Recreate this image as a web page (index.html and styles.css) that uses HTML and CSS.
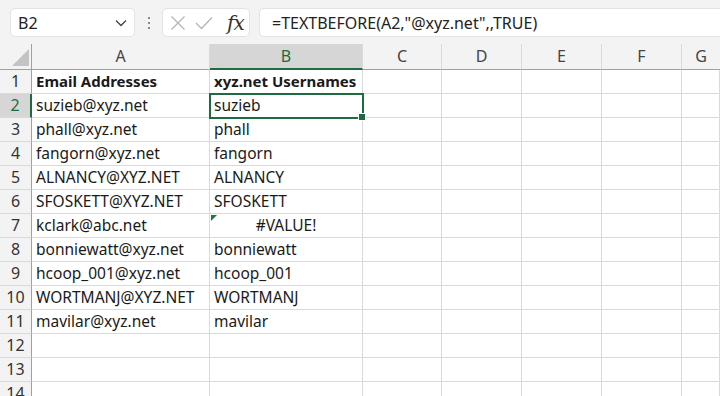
FILE: index.html
```html
<!DOCTYPE html>
<html>
<head>
<meta charset="utf-8">
<link rel="stylesheet" href="styles.css">
</head>
<body>
<div class="top">
  <div class="namebox"><span class="ref">B2</span>
    <svg class="chev" width="12" height="8" viewBox="0 0 12 8"><path d="M1 1.5 L6 6.5 L11 1.5" fill="none" stroke="#444" stroke-width="1.3"/></svg>
  </div>
  <div class="dots"><i></i><i></i><i></i></div>
  <div class="fxbox">
    <svg width="16" height="16" viewBox="0 0 16 16"><path d="M1.5 1.5 L14.5 14.5 M14.5 1.5 L1.5 14.5" stroke="#b5b5b5" stroke-width="1.3" fill="none"/></svg>
    <svg width="18" height="14" viewBox="0 0 18 14"><path d="M1 7 L6.5 12.5 L17 1.5" stroke="#b5b5b5" stroke-width="1.3" fill="none"/></svg>
    <span class="fx">fx</span>
  </div>
  <div class="formula">=TEXTBEFORE(A2,"@xyz.net",,TRUE)</div>
</div>
<div class="sheet">
  <div class="hd corner"><span class="tri"></span></div>
  <div class="hd col">A</div>
  <div class="hd col sel">B</div>
  <div class="hd col">C</div>
  <div class="hd col">D</div>
  <div class="hd col">E</div>
  <div class="hd col">F</div>
  <div class="hd col last">G</div>

  <div class="rh">1</div><div class="c b">Email Addresses</div><div class="c b">xyz.net Usernames</div><div class="c"></div><div class="c"></div><div class="c"></div><div class="c"></div><div class="c"></div>
  <div class="rh sel">2</div><div class="c">suzieb@xyz.net</div><div class="c active">suzieb<span class="handle"></span></div><div class="c"></div><div class="c"></div><div class="c"></div><div class="c"></div><div class="c"></div>
  <div class="rh">3</div><div class="c">phall@xyz.net</div><div class="c">phall</div><div class="c"></div><div class="c"></div><div class="c"></div><div class="c"></div><div class="c"></div>
  <div class="rh">4</div><div class="c">fangorn@xyz.net</div><div class="c">fangorn</div><div class="c"></div><div class="c"></div><div class="c"></div><div class="c"></div><div class="c"></div>
  <div class="rh">5</div><div class="c">ALNANCY@XYZ.NET</div><div class="c">ALNANCY</div><div class="c"></div><div class="c"></div><div class="c"></div><div class="c"></div><div class="c"></div>
  <div class="rh">6</div><div class="c">SFOSKETT@XYZ.NET</div><div class="c">SFOSKETT</div><div class="c"></div><div class="c"></div><div class="c"></div><div class="c"></div><div class="c"></div>
  <div class="rh">7</div><div class="c">kclark@abc.net</div><div class="c err"><span class="flag"></span>#VALUE!</div><div class="c"></div><div class="c"></div><div class="c"></div><div class="c"></div><div class="c"></div>
  <div class="rh">8</div><div class="c">bonniewatt@xyz.net</div><div class="c">bonniewatt</div><div class="c"></div><div class="c"></div><div class="c"></div><div class="c"></div><div class="c"></div>
  <div class="rh">9</div><div class="c">hcoop_001@xyz.net</div><div class="c">hcoop_001</div><div class="c"></div><div class="c"></div><div class="c"></div><div class="c"></div><div class="c"></div>
  <div class="rh">10</div><div class="c">WORTMANJ@XYZ.NET</div><div class="c">WORTMANJ</div><div class="c"></div><div class="c"></div><div class="c"></div><div class="c"></div><div class="c"></div>
  <div class="rh">11</div><div class="c">mavilar@xyz.net</div><div class="c">mavilar</div><div class="c"></div><div class="c"></div><div class="c"></div><div class="c"></div><div class="c"></div>
  <div class="rh">12</div><div class="c"></div><div class="c"></div><div class="c"></div><div class="c"></div><div class="c"></div><div class="c"></div><div class="c"></div>
  <div class="rh">13</div><div class="c"></div><div class="c"></div><div class="c"></div><div class="c"></div><div class="c"></div><div class="c"></div><div class="c"></div>
  <div class="rh">14</div><div class="c"></div><div class="c"></div><div class="c"></div><div class="c"></div><div class="c"></div><div class="c"></div><div class="c"></div>
</div>
</body>
</html>
```
FILE: styles.css
```css
* { box-sizing: border-box; }
html, body { margin: 0; padding: 0; }
body {
  width: 720px;
  height: 396px;
  overflow: hidden;
  background: #fff;
  font-family: "Noto Sans", "Open Sans", sans-serif;
  font-size: 15.5px;
  color: #1a1a1a;
}
.top {
  height: 44px;
  background: #f3f3f3;
  display: flex;
  align-items: flex-start;
  padding: 8px 0 0 10px;
}
.namebox {
  width: 125px;
  height: 29px;
  background: #fff;
  border: 1px solid #e3e3e3;
  border-radius: 5px;
  display: flex;
  align-items: center;
  justify-content: space-between;
  padding: 0 7px 0 7px;
}
.namebox .ref { color: #222; font-size: 16px; }
.dots {
  width: 27px;
  height: 29px;
  display: flex;
  flex-direction: column;
  align-items: center;
  justify-content: center;
  gap: 3px;
}
.dots i {
  display: block;
  width: 2px;
  height: 2px;
  background: #8a8a8a;
}
.fxbox {
  width: 88px;
  height: 29px;
  background: #fff;
  border: 1px solid #e3e3e3;
  border-radius: 5px;
  display: flex;
  align-items: center;
  padding: 0 0 0 7px;
  gap: 9px;
}
.fx {
  font-family: "DejaVu Serif", "Liberation Serif", serif;
  font-style: italic;
  font-size: 20px;
  line-height: 20px;
  color: #333;
  margin-left: 5px;
  letter-spacing: -1px;
}
.formula {
  flex: 1;
  margin-left: 9px;
  height: 29px;
  background: #fff;
  border: 1px solid #e3e3e3;
  border-right: none;
  border-radius: 5px 0 0 5px;
  padding: 2px 0 0 12px;
  line-height: 24px;
  font-size: 16px;
  color: #222;
}
.sheet {
  display: grid;
  grid-template-columns: 32px 178px 153px 79px 80px 80px 80px 1fr;
  grid-template-rows: 26px repeat(14, 24px);
}
.hd {
  background: #f3f3f3;
  border-bottom: 1px solid #a0a0a0;
  border-right: 1px solid #d9d9d9;
  text-align: center;
  color: #444;
  line-height: 25px;
  font-size: 16px;
}
.hd.last { border-right: none; }
.corner {
  position: relative;
  border-right: 1px solid #a0a0a0;
}
.tri {
  position: absolute;
  right: 2px;
  bottom: 3px;
  width: 0;
  height: 0;
  border-left: 17px solid transparent;
  border-bottom: 17px solid #c3c3c3;
}
.hd.sel {
  background: #d6d6d6;
  color: #1d6b3e;
  border-bottom: 2px solid #1d6b3e;
}
.rh {
  background: #f3f3f3;
  border-right: 1px solid #a0a0a0;
  border-bottom: 1px solid #d9d9d9;
  text-align: center;
  color: #333;
  line-height: 23px;
  font-size: 16px;
}
.rh.sel {
  background: #d6d6d6;
  color: #1d6b3e;
  border-right: 2px solid #1d6b3e;
}
.c {
  border-right: 1px solid #dadada;
  border-bottom: 1px solid #dadada;
  padding-left: 4px;
  line-height: 23px;
  white-space: nowrap;
  overflow: visible;
  position: relative;
}
.c.b { font-weight: bold; font-size: 15px; }
.c.active {
  outline: 2px solid #1d6b3e;
  outline-offset: -1px;
  z-index: 2;
}
.handle {
  position: absolute;
  right: -4px;
  bottom: -4px;
  width: 6px;
  height: 6px;
  background: #1d6b3e;
  border: 1px solid #fff;
  box-sizing: content-box;
}
.c.err { text-align: center; padding-left: 0; }
.flag {
  position: absolute;
  left: 1px;
  top: 1px;
  width: 0;
  height: 0;
  border-top: 6px solid #1e7b34;
  border-right: 6px solid transparent;
}
```
